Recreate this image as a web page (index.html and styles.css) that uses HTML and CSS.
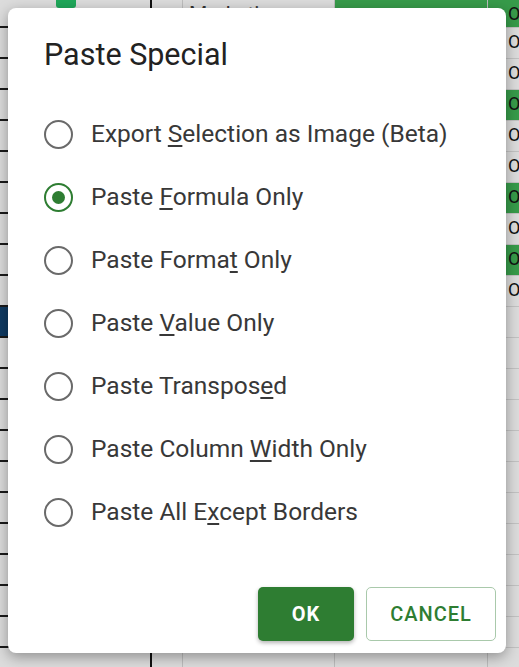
FILE: index.html
```html
<!DOCTYPE html>
<html>
<head>
<meta charset="utf-8">
<link rel="stylesheet" href="styles.css">
</head>
<body>
<div class="sheet">
  <div class="col c1">
    <div class="cell first"><span class="check"></span></div>
    <div class="cell"></div><div class="cell"></div><div class="cell"></div><div class="cell"></div>
    <div class="cell"></div><div class="cell"></div><div class="cell"></div><div class="cell"></div>
    <div class="cell"></div><div class="cell blue"></div><div class="cell"></div><div class="cell"></div>
    <div class="cell"></div><div class="cell"></div><div class="cell"></div><div class="cell"></div>
    <div class="cell"></div><div class="cell"></div><div class="cell"></div><div class="cell"></div>
    <div class="cell"></div>
  </div>
  <div class="col c2">
    <div class="cell first"></div>
  </div>
  <div class="col c3">
    <div class="cell first txt">Marketing</div>
  </div>
  <div class="col c4">
    <div class="cell first green"></div>
  </div>
  <div class="col c5">
    <div class="cell first green txt">O</div>
    <div class="cell txt">O</div><div class="cell txt">O</div><div class="cell green txt">O</div>
    <div class="cell txt">O</div><div class="cell txt">O</div><div class="cell green txt">O</div>
    <div class="cell txt">O</div><div class="cell green txt">O</div><div class="cell txt">O</div>
    <div class="cell"></div><div class="cell"></div><div class="cell"></div><div class="cell"></div>
    <div class="cell"></div><div class="cell"></div><div class="cell"></div><div class="cell"></div>
    <div class="cell"></div><div class="cell"></div><div class="cell"></div><div class="cell"></div>
  </div>
</div>

<div class="dialog">
  <h1 class="title">Paste Special</h1>
  <div class="options">
    <label class="option"><span class="radio"></span><span class="label">Export <u>S</u>election as Image (Beta)</span></label>
    <label class="option"><span class="radio checked"></span><span class="label">Paste <u>F</u>ormula Only</span></label>
    <label class="option"><span class="radio"></span><span class="label">Paste Forma<u>t</u> Only</span></label>
    <label class="option"><span class="radio"></span><span class="label">Paste <u>V</u>alue Only</span></label>
    <label class="option"><span class="radio"></span><span class="label">Paste Transpos<u>e</u>d</span></label>
    <label class="option"><span class="radio"></span><span class="label">Paste Column <u>W</u>idth Only</span></label>
    <label class="option"><span class="radio"></span><span class="label">Paste All E<u>x</u>cept Borders</span></label>
  </div>
  <div class="actions">
    <button class="btn ok">OK</button>
    <button class="btn cancel">CANCEL</button>
  </div>
</div>
</body>
</html>
```

FILE: styles.css
```css
* { box-sizing: border-box; }
html, body { margin: 0; padding: 0; }
body {
  width: 519px;
  height: 667px;
  overflow: hidden;
  position: relative;
  font-family: Roboto, "Liberation Sans", sans-serif;
  background: #d9d9d9;
}

.sheet {
  display: flex;
  width: 519px;
  height: 667px;
  overflow: hidden;
}
.col {
  display: flex;
  flex-direction: column;
  flex: none;
  height: 667px;
}
.c1 { width: 152px; background: #dcdcdc; border-right: 2px solid #111; }
.c2 { width: 31px; background: #dcdcdc; border-right: 1px solid #bdbdbd; }
.c3 { width: 152px; background: #dcdcdc; border-right: 1px solid #bdbdbd; }
.c4 { width: 153px; background: #dcdcdc; border-right: 1px solid #bdbdbd; }
.c5 { width: 31px; background: #dcdcdc; }

.cell {
  flex: none;
  height: 31px;
  border-bottom: 1px solid #c2c2c2;
  position: relative;
  overflow: hidden;
  white-space: nowrap;
}
.cell.first { height: 28px; }
.c1 .cell { border-bottom: 2px solid #1a1a1a; }
.cell.blue { background: #0f3a62; }
.cell.green { background: #379b4a; }
.cell.txt {
  font-size: 18px;
  line-height: 28px;
  color: #111;
  padding-left: 20px;
}
.c3 .cell.txt { padding-left: 6px; color: #333; font-size: 21px; }
.check {
  position: absolute;
  left: 56px;
  top: -6px;
  width: 20px;
  height: 14px;
  border-radius: 3px;
  background: #1fa85a;
}

.dialog {
  position: absolute;
  left: 8px;
  top: 8px;
  width: 498px;
  height: 645px;
  background: #fff;
  border-radius: 8px;
  box-shadow: 0 4px 14px rgba(0,0,0,0.35);
  display: flex;
  flex-direction: column;
  padding: 0 10px 12px 0;
}
.title {
  margin: 29px 0 0 36px;
  font-size: 30.5px;
  line-height: 36px;
  font-weight: 400;
  color: #222;
}
.options {
  margin-top: 29.5px;
  display: flex;
  flex-direction: column;
}
.option {
  height: 63px;
  display: flex;
  align-items: center;
  padding-left: 36px;
}
.radio {
  width: 29px;
  height: 29px;
  border-radius: 50%;
  border: 2.7px solid #6a6a6a;
  flex: none;
  display: flex;
  align-items: center;
  justify-content: center;
}
.radio.checked { border-color: #2e7d32; }
.radio.checked::after {
  content: "";
  width: 13px;
  height: 13px;
  border-radius: 50%;
  background: #2e7d32;
}
.label {
  margin-left: 18px;
  font-size: 24.5px;
  color: #383838;
  line-height: 30px;
}
.label u {
  text-decoration-thickness: 1.5px;
  text-underline-offset: 3px;
}
.actions {
  margin-top: auto;
  display: flex;
  justify-content: flex-end;
  gap: 12px;
}
.btn {
  height: 54px;
  border-radius: 5px;
  font-family: Roboto, "Liberation Sans", sans-serif;
  font-size: 20px;
  letter-spacing: 1px;
  font-weight: 500;
  cursor: pointer;
}
.ok {
  width: 96px;
  background: #2e7d32;
  color: #fff;
  border: none;
  font-weight: 700;
  box-shadow: 0 2px 4px rgba(0,0,0,0.3);
}
.cancel {
  width: 130px;
  background: #fff;
  color: #2e7d32;
  border: 1px solid #a9c9ab;
}
```
